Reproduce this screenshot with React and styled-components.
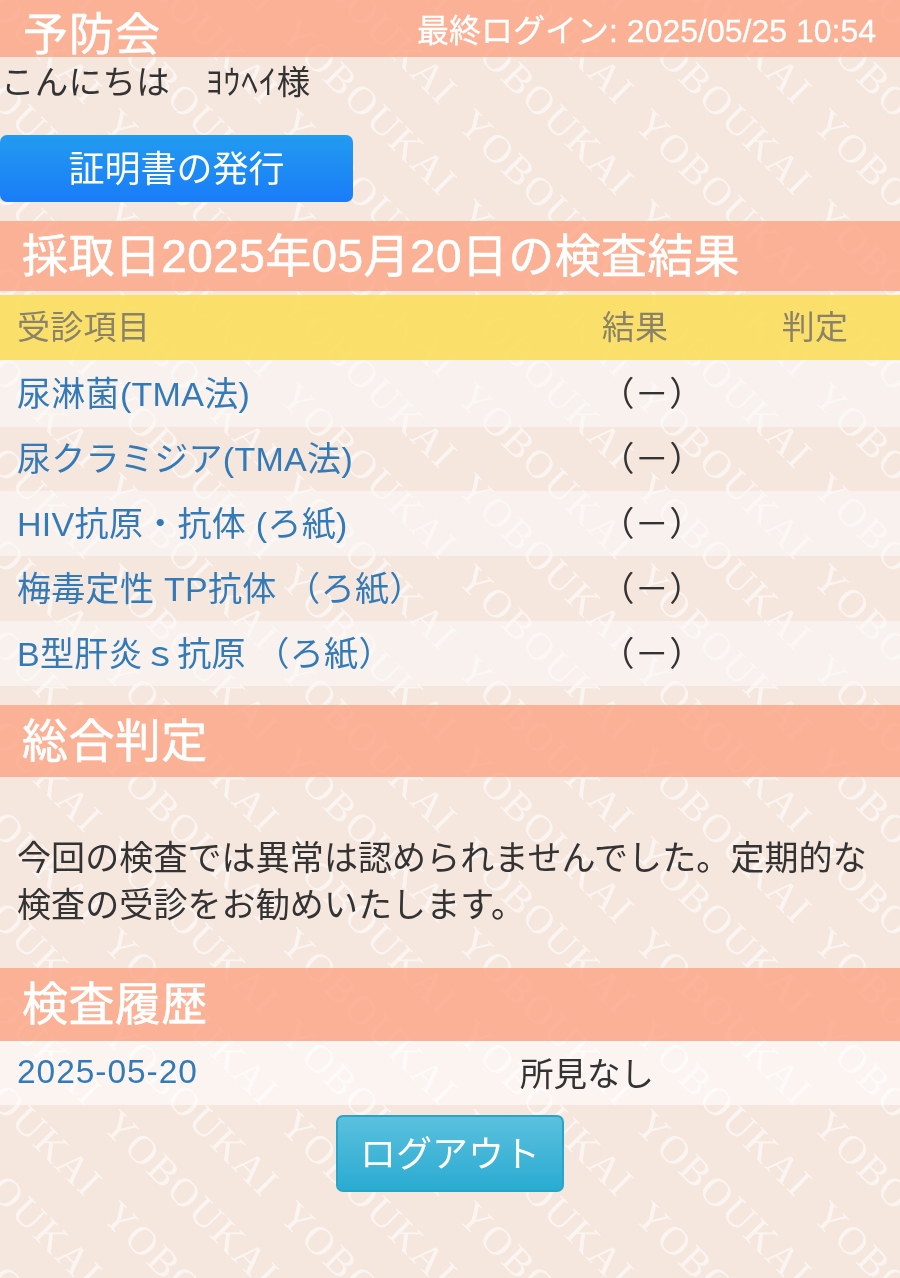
import React from "react";
import styled, { createGlobalStyle } from "styled-components";

const tile = (() => {
  const W = 177.5, H = 91;
  const items = [];
  for (let dy = -3; dy <= 3; dy++) {
    for (let dx = -2; dx <= 2; dx++) {
      const x = 100.5 + dx * W;
      const y = 35 + dy * H;
      items.push(`<text transform='translate(${x} ${y}) rotate(45)' text-rendering='geometricPrecision' letter-spacing='2.2' font-family='Liberation Serif' font-size='40' fill='%23ffffff' fill-opacity='0.62'>YOBOUKAI</text>`);
    }
  }
  return `url("data:image/svg+xml,<svg xmlns='http://www.w3.org/2000/svg' width='${W}' height='${H}'>${items.join("")}</svg>")`;
})();

const Global = createGlobalStyle`
  html, body { margin: 0; padding: 0; }
  body {
    background-color: #f5e6de;
    background-image: ${tile};
    background-size: 177.5px 91px;
    min-height: 1278px;
    color: #333;
    font-family: "Liberation Sans", "Noto Sans CJK JP", sans-serif;
  }
  * { box-sizing: border-box; }
`;

const SALMON = "rgba(252, 170, 140, 0.88)";
const STRIPE = "rgba(250, 248, 246, 0.6)";

const Page = styled.div`
  width: 900px;
  height: 1278px;
  overflow: hidden;
  display: flex;
  flex-direction: column;
  filter: blur(0.35px);
`;
const TopBar = styled.header`
  height: 57px;
  background: ${SALMON};
  display: flex;
  align-items: center;
  justify-content: space-between;
  padding: 0 24px 0 23px;
  color: #fff;
`;
const Logo = styled.h1`
  margin: 14px 0 0;
  font-size: 45px;
  letter-spacing: 1px;
  line-height: 57px;
  font-weight: 400;
  -webkit-text-stroke: 0.6px #fff;
`;
const LastLogin = styled.div`
  font-size: 32px;
  margin-top: -1px;
  -webkit-text-stroke: 0.3px #fff;
`;
const Greeting = styled.p`
  margin: 0;
  height: 78px;
  padding: 2px 0 0 1px;
  font-size: 33.5px;
  line-height: 48px;
  letter-spacing: 0.3px;
  color: #333;
`;
const Kana = styled.span`
  letter-spacing: 1px;
  margin-left: 2px;
`;
const IssueButton = styled.button`
  width: 353px;
  height: 67px;
  border: 0;
  border-radius: 7px;
  background: linear-gradient(#229bf0, #1a7cf8);
  color: #fff;
  font: inherit;
  font-size: 36px;
  padding: 0 0 6px;
  margin-bottom: 19px;
`;
const SectionBar = styled.h2`
  margin: ${(p) => p.$mt || 0}px 0 0;
  height: ${(p) => p.$h || 72}px;
  background: ${SALMON};
  color: #fff;
  font-size: 46px;
  letter-spacing: 0.4px;
  font-weight: 400;
  line-height: ${(p) => p.$h || 72}px;
  padding-left: 22px;
  white-space: nowrap;
  -webkit-text-stroke: 0.6px #fff;
`;
const Row = styled.div`
  display: grid;
  grid-template-columns: 1fr 186px 140px;
  align-items: center;
  height: ${(p) => p.$h}px;
  padding: 0 15px 5px 17px;
  font-size: 34px;
  letter-spacing: 0.3px;
  background: ${(p) => p.$bg || "transparent"};
`;
const HeadRow = styled(Row)`
  margin-top: 4px;
  padding-bottom: 6px;
  background: rgba(250, 222, 96, 0.92);
  color: #8b826a;
  font-size: 33px;
`;
const Center = styled.div`
  text-align: center;
  padding-right: ${(p) => p.$pr || 0}px;
`;
const ItemLink = styled.a`
  color: #337ab7;
  text-decoration: none;
`;
const DateLink = styled(ItemLink)`
  letter-spacing: 0.95px;
`;
const Verdict = styled.p`
  margin: 0;
  height: 191px;
  padding: 58px 17px 0;
  font-size: 34px;
  letter-spacing: 0.1px;
  line-height: 47px;
  color: #333;
`;
const HistoryRow = styled.div`
  display: grid;
  grid-template-columns: 503px 1fr;
  align-items: center;
  height: 64px;
  padding: 0 0 3px 17px;
  font-size: 33.5px;
  background: rgba(255, 255, 255, 0.55);
`;
const LogoutWrap = styled.div`
  display: flex;
  justify-content: center;
  padding-top: 10px;
`;
const LogoutButton = styled.button`
  width: 228px;
  height: 77px;
  border: 2px solid #28a4c9;
  border-radius: 7px;
  background: linear-gradient(#5bc0de, #2aabd2);
  color: #fff;
  font: inherit;
  font-size: 36px;
  padding: 0 0 6px;
`;

const rows = [
  ["尿淋菌(TMA法)", 67, STRIPE],
  ["尿クラミジア(TMA法)", 64],
  ["HIV抗原・抗体 (ろ紙)", 65, STRIPE],
  ["梅毒定性 TP抗体 （ろ紙）", 65],
  ["B型肝炎ｓ抗原 （ろ紙）", 65, STRIPE],
];

export default function App() {
  return (
    <Page>
      <Global />
      <TopBar>
        <Logo>予防会</Logo>
        <LastLogin>最終ログイン: 2025/05/25 10:54</LastLogin>
      </TopBar>
      <Greeting>こんにちは　<Kana>ﾖｳﾍｲ様</Kana></Greeting>
      <IssueButton>証明書の発行</IssueButton>
      <SectionBar $h={70}>採取日2025年05月20日の検査結果</SectionBar>
      <HeadRow $h={65}>
        <div>受診項目</div>
        <Center $pr={34}>結果</Center>
        <Center>判定</Center>
      </HeadRow>
      {rows.map(([name, h, bg]) => (
        <Row key={name} $h={h} $bg={bg}>
          <ItemLink href="#">{name}</ItemLink>
          <Center>（－）</Center>
          <Center />
        </Row>
      ))}
      <SectionBar $mt={19}>総合判定</SectionBar>
      <Verdict>今回の検査では異常は認められませんでした。定期的な検査の受診をお勧めいたします。</Verdict>
      <SectionBar $h={73}>検査履歴</SectionBar>
      <HistoryRow>
        <DateLink href="#">2025-05-20</DateLink>
        <div>所見なし</div>
      </HistoryRow>
      <LogoutWrap>
        <LogoutButton>ログアウト</LogoutButton>
      </LogoutWrap>
    </Page>
  );
}
